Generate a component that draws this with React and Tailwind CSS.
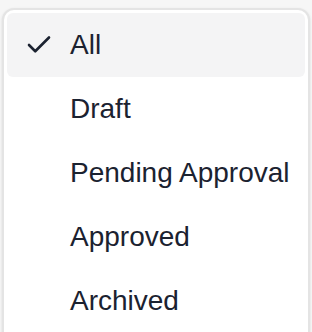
import React from "react";
import { Check } from "lucide-react";

const options = ["All", "Draft", "Pending Approval", "Approved", "Archived"];

const App = () => {
    const selected = "All";

    return (
        <div
            className="w-[312px] h-[332px] overflow-hidden bg-[#f6f6f6] pt-2 px-[2px]"
            style={{ fontFamily: '"Liberation Sans", Arial, sans-serif' }}
        >
            {/* Menu */}
            <div className="h-[340px] bg-white border-2 border-[#e4e4e4] rounded-[12px] p-[3px] shadow-sm">
                {options.map((opt) => (
                    <div
                        key={opt}
                        className={
                            opt === selected
                                ? "h-16 flex items-center rounded-[6px] bg-[#f4f4f5] text-[#1b2230]"
                                : "h-16 flex items-center rounded-[6px] text-[#1b2230]"
                        }
                    >
                        <span className="w-[63px] flex justify-center">
                            {opt === selected && <Check size={30} strokeWidth={2.1} />}
                        </span>
                        <span className="text-[28px] leading-none">{opt}</span>
                    </div>
                ))}
            </div>
        </div>
    );
};

export default App;
